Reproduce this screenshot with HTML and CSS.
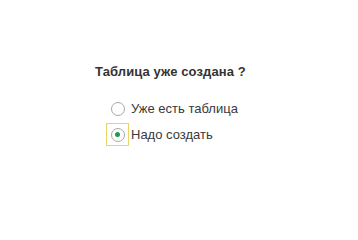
FILE: index.html
```html
<!DOCTYPE html>
<html lang="ru">
<head>
<meta charset="utf-8">
<link rel="stylesheet" href="styles.css">
</head>
<body>
<div class="form">
  <div class="title">Таблица уже создана ?</div>
  <div class="options">
    <label class="option">
      <span class="box"><span class="radio"></span></span>
      <span class="label">Уже есть таблица</span>
    </label>
    <label class="option">
      <span class="box focused"><span class="radio checked"></span></span>
      <span class="label">Надо создать</span>
    </label>
  </div>
</div>
</body>
</html>
```
FILE: styles.css
```css
html, body {
  margin: 0;
  padding: 0;
  background: #ffffff;
}
body {
  width: 358px;
  height: 218px;
  font-family: "Liberation Sans", Arial, sans-serif;
  font-size: 13px;
  line-height: 15px;
}
.form {
  padding: 64px 0 0 95px;
}
.title {
  font-weight: bold;
  color: #333333;
  letter-spacing: 0.1px;
}
.options {
  margin: 18px 0 0 11px;
  display: flex;
  flex-direction: column;
  gap: 3px;
}
.option {
  display: flex;
  align-items: center;
  height: 23px;
}
.box {
  width: 23px;
  height: 23px;
  box-sizing: border-box;
  border: 1px solid transparent;
  display: flex;
  align-items: center;
  justify-content: center;
}
.box.focused {
  border-color: #ead463;
}
.radio {
  width: 14px;
  height: 14px;
  box-sizing: border-box;
  border: 1px solid #a8a8a8;
  border-radius: 50%;
  background: #ffffff;
  display: flex;
  align-items: center;
  justify-content: center;
}
.radio.checked::after {
  content: "";
  width: 5px;
  height: 5px;
  border-radius: 50%;
  background: #1f9a4e;
}
.label {
  margin-left: 2px;
  color: #3a3a3a;
}
```
